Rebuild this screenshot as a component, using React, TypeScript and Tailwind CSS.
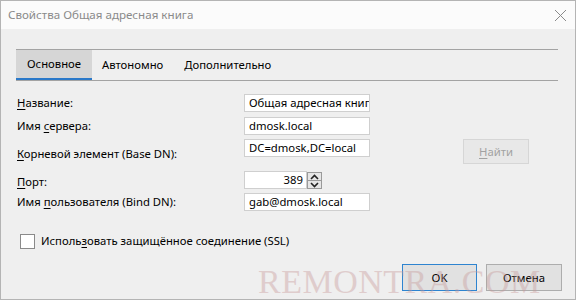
import React from "react";

const U = ({ c }: { c: string }) => <span className="underline underline-offset-2 decoration-1">{c}</span>;

function Field({ value, w = "w-[126px]" }: { value: string; w?: string }) {
  return (
    <div className={`${w} h-[18px] bg-white border border-[#cfcfcf] flex items-center pl-[4px] overflow-hidden whitespace-nowrap text-black`}>
      {value}
    </div>
  );
}

export default function App() {
  return (
    <div className="w-[576px] h-[300px] relative overflow-hidden bg-[#efefef] border border-[#b4b4b4] flex flex-col text-[11.3px] leading-[16px] text-[#1a1a1a] font-['Noto_Sans',sans-serif]">
      {/* title bar */}
      <div className="h-[28px] shrink-0 bg-[#fbfbfb] flex items-center justify-between pl-[7px] pr-[8px] text-[#8a8a8a] text-[11.6px]">
        <span>Свойства Общая адресная книга</span>
        <svg width="13" height="13" viewBox="0 0 13 13">
          <path d="M1 1 L12 12 M12 1 L1 12" stroke="#8a8a8a" strokeWidth="1" fill="none" />
        </svg>
      </div>

      {/* tabs */}
      <div className="mt-[20px] ml-[15px] mr-[17px] border-t border-b border-[#a3a3a3] h-[32px] flex">
        <div className="w-[76px] h-full bg-[#d6d6d6] border-b-[2px] border-[#2b79c9] flex items-center justify-center text-black">
          Основное
        </div>
        <div className="h-full px-[10px] flex items-center text-black">Автономно</div>
        <div className="h-full px-[11px] flex items-center text-black">Дополнительно</div>
      </div>

      {/* form */}
      <div className="ml-[16px] mt-[13px] flex flex-col text-black">
        <div className="flex items-center h-[18px]">
          <div className="w-[227px]"><U c="Н" />азвание:</div>
          <Field value="Общая адресная книга" />
        </div>
        <div className="flex items-center h-[18px] mt-[5px]">
          <div className="w-[227px]">Имя <U c="с" />ервера:</div>
          <Field value="dmosk.local" />
        </div>
        <div className="flex items-start h-[25px] mt-[4px]">
          <div className="w-[227px] pt-[7px]"><U c="К" />орневой элемент (Base DN):</div>
          <Field value="DC=dmosk,DC=local" />
          <div className="ml-[93px] w-[66px] h-[25px] bg-[#e8e8e8] border border-[#d6d6d6] flex items-center justify-center text-[#a2a2a2]">
            <span><U c="Н" />айти</span>
          </div>
        </div>
        <div className="flex items-center h-[18px] mt-[7px]">
          <div className="w-[227px] pt-[3px]"><U c="П" />орт:</div>
          <div className="w-[63px] h-[18px] bg-white border border-[#cfcfcf] flex items-center justify-end pr-[3px]">389</div>
          <div className="w-[15px] h-[17px] flex flex-col border border-[#9a9a9a] bg-[#e6e6e6] mt-[1px]">
            <div className="flex-1 flex items-center justify-center border-b border-[#9a9a9a]">
              <svg width="9" height="6" viewBox="0 0 9 6"><path d="M1 5 L4.5 1.5 L8 5" stroke="#222" strokeWidth="1.6" fill="none" /></svg>
            </div>
            <div className="flex-1 flex items-center justify-center">
              <svg width="9" height="6" viewBox="0 0 9 6"><path d="M1 1 L4.5 4.5 L8 1" stroke="#222" strokeWidth="1.6" fill="none" /></svg>
            </div>
          </div>
        </div>
        <div className="flex items-center h-[18px] mt-[4px]">
          <div className="w-[227px]">Имя <U c="п" />ользователя (Bind DN):</div>
          <Field value="gab@dmosk.local" />
        </div>
      </div>

      {/* checkbox */}
      <div className="ml-[19px] mt-[22px] flex items-center">
        <div className="w-[15px] h-[15px] bg-white border border-[#8a8a8a]" />
        <span className="ml-[6px] text-black">Исполь<U c="з" />овать защищённое соединение (SSL)</span>
      </div>

      {/* buttons */}
      <div className="mt-[15px] flex justify-end gap-[9px] mr-[13px]">
        <div className="w-[75px] h-[27px] bg-[#e1e1e1] border border-[#2e84d0] flex items-center justify-center text-black">OK</div>
        <div className="w-[76px] h-[27px] bg-[#e1e1e1] border border-[#adadad] flex items-center justify-center text-black">Отмена</div>
      </div>

      {/* watermark */}
      <div className="absolute left-[257px] top-[264px] pointer-events-none text-[34px] leading-[34px] tracking-[0.5px] text-[#c89a9a] opacity-40 font-['Liberation_Serif',serif]">
        REMONTRA.COM
      </div>
    </div>
  );
}
